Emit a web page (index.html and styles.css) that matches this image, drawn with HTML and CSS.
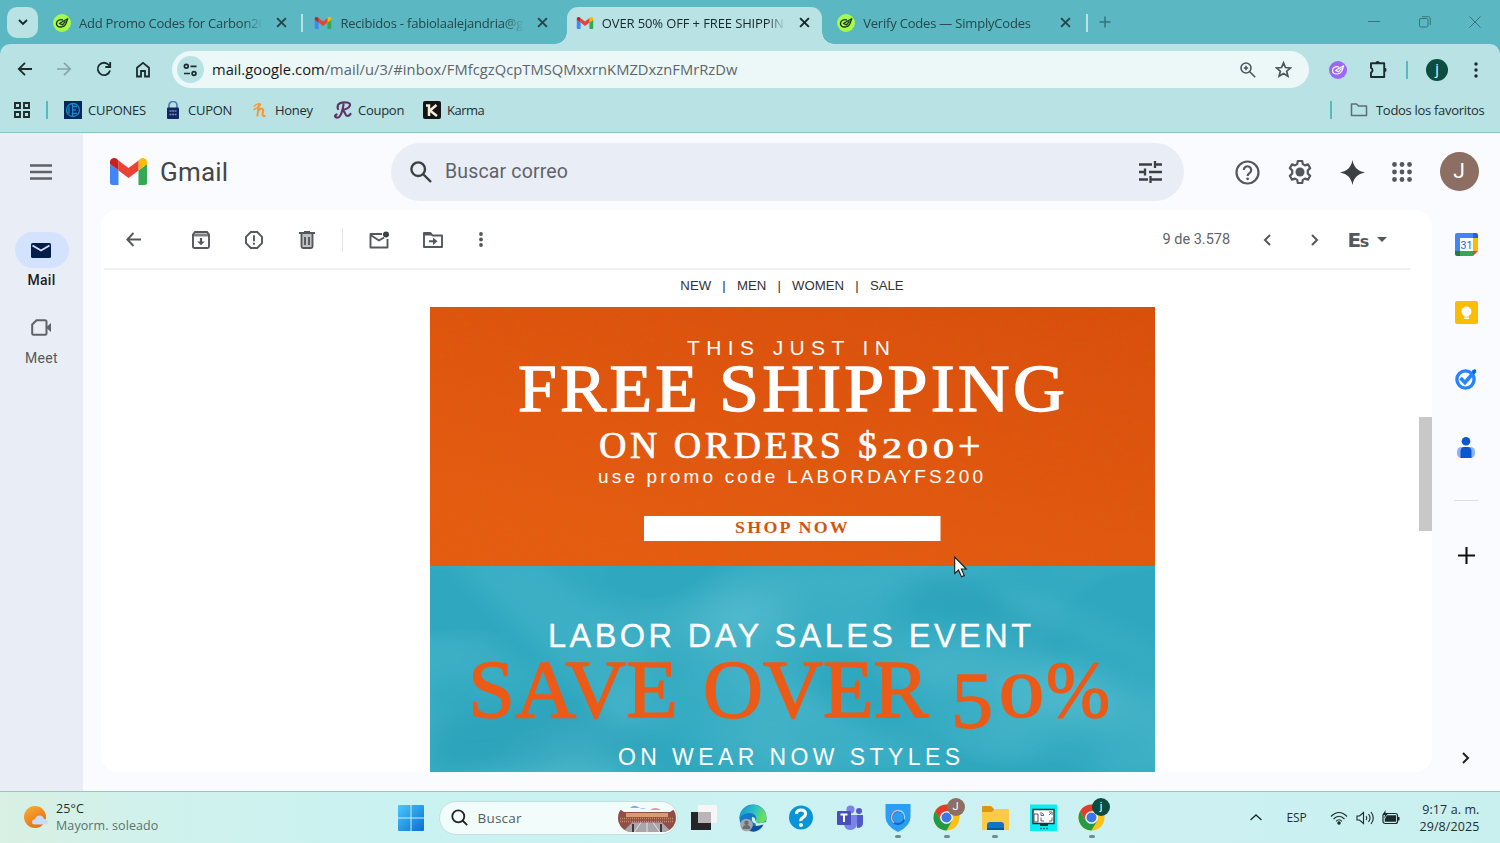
FILE: index.html
```html
<!DOCTYPE html>
<html lang="es">
<head>
    <meta charset="UTF-8">
    <meta name="viewport" content="width=device-width, initial-scale=1.0">
    <title>Gmail</title>
    <link rel="stylesheet" href="styles.css">
</head>
<body>
    <!-- shared icons -->
    <svg class="defs" width="0" height="0">
        <symbol id="gmail" viewBox="0 0 37 27">
            <path fill="#4285f4" d="M0 6v18.500Q0 27 2.500 27H8.500V12.500L0 6z"/>
            <path fill="#34a853" d="M28.500 12.500V27h6Q37 27 37 24.500V6z"/>
            <path fill="#fbbc04" d="M28.500 2.500V12.500L37 6V4C37 .3 33-1.200 30 1z"/>
            <path fill="#ea4335" d="M8.500 12.500V2.500l10 7.500 10-7.500v10L18.500 20z"/>
            <path fill="#c5221f" d="M0 4v2l8.500 6.500V2.500L7 1C4-1.200 0 .3 0 4z"/>
        </symbol>
        <symbol id="simply" viewBox="0 0 18 18">
            <circle cx="9" cy="9" r="9" fill="#a5fa4b"/>
            <path fill="none" stroke="#173315" stroke-width="1.300" stroke-linecap="round" stroke-linejoin="round" d="M9.500 5.800C6 5.300 3.500 7 3.500 9.500s2 3.500 4.500 3.500 4-1.500 5-3.500l1.700-4.800-4.500 2.500L6.500 9.500l3 1.300 2.500-3"/>
        </symbol>
        <symbol id="x" viewBox="0 0 10 10">
            <path d="M1 1l8 8M9 1L1 9" fill="none" stroke="currentColor" stroke-width="1.800"/>
        </symbol>
        <symbol id="chrome" viewBox="0 0 28 28">
            <circle cx="14" cy="14" r="13.500" fill="#fbc116"/>
            <path fill="#e33b2e" d="M2.300 7.300A13.500 13.500 0 0 1 25.700 7.300H14L8.200 17.400z"/>
            <path fill="#229a48" d="M2.300 7.300A13.500 13.500 0 0 0 14 27.500l5.800-10.200H8.200z"/>
            <circle cx="14" cy="14" r="6.600" fill="#fff"/>
            <circle cx="14" cy="14" r="5.200" fill="#3b78e7"/>
        </symbol>
    </svg>

    <div class="tabs">
        <button class="tab-search"><svg width="10" height="7" viewBox="0 0 10 7"><path d="M1 1l4 4 4-4" fill="none" stroke="#17292b" stroke-width="1.900"/></svg></button>
        <div class="tab sep">
            <svg class="fav" width="18" height="18"><use href="#simply"/></svg>
            <span class="tab-title t1">Add Promo Codes for Carbon2C</span>
            <svg class="close" width="11" height="11"><use href="#x"/></svg>
        </div>
        <div class="tab">
            <svg class="fav" width="16" height="12"><use href="#gmail"/></svg>
            <span class="tab-title t2">Recibidos - fabiolaalejandria@g</span>
            <svg class="close" width="11" height="11"><use href="#x"/></svg>
        </div>
        <div class="tab active">
            <svg class="fav" width="16" height="12"><use href="#gmail"/></svg>
            <span class="tab-title t3">OVER 50% OFF + FREE SHIPPIN</span>
            <svg class="close" width="11" height="11"><use href="#x"/></svg>
        </div>
        <div class="tab sep">
            <svg class="fav" width="18" height="18"><use href="#simply"/></svg>
            <span class="tab-title t4">Verify Codes — SimplyCodes</span>
            <svg class="close" width="11" height="11"><use href="#x"/></svg>
        </div>
        <svg class="new-tab" width="12" height="12" viewBox="0 0 12 12"><path d="M6 .5v11M.5 6h11" stroke="#3b7379" stroke-width="1.500"/></svg>
        <div class="window-buttons">
            <svg width="12" height="12" viewBox="0 0 12 12"><path d="M0 5.500h12" stroke="#3b7379"/></svg>
            <svg width="12" height="12" viewBox="0 0 12 12" fill="none" stroke="#3b7379"><rect x=".5" y="2.500" width="8.500" height="8.500" rx="1.500"/><path d="M3 .7h6.500q1.800 0 1.800 1.800V9"/></svg>
            <svg width="12" height="12" viewBox="0 0 12 12"><path d="M.5.5l11 11M11.500.5l-11 11" stroke="#3b7379"/></svg>
        </div>
    </div>

    <div class="browser">
        <div class="toolbar">
            <div class="nav-icons">
                <svg width="16" height="16" viewBox="0 0 16 16" fill="none" stroke="#1d2b2d" stroke-width="1.800"><path d="M15 8H2M8 1.800L1.800 8 8 14.200"/></svg>
                <svg width="16" height="16" viewBox="0 0 16 16" fill="none" stroke="#86a4a7" stroke-width="1.700"><path d="M1 8h13M8 1.800L14.200 8 8 14.200"/></svg>
                <svg width="16" height="16" viewBox="0 0 16 16" fill="none" stroke="#1d2b2d" stroke-width="1.800"><path d="M14 9.500A6.200 6.200 0 1 1 12.800 4l1.400 1.600M14.200 1v5H9.300"/></svg>
                <svg width="16" height="17" viewBox="0 0 16 17" fill="none" stroke="#1d2b2d" stroke-width="1.800"><path d="M2 6.700L8 1.900l6 4.800V15.500h-4V10H6v5.500H2z"/></svg>
            </div>
            <div class="omnibox">
                <span class="site-info"><svg width="15" height="14" viewBox="0 0 15 14" fill="none" stroke="#1d2b2d" stroke-width="1.700"><circle cx="3.300" cy="3.300" r="1.900"/><path d="M7.500 3.300h6M1 10.500h6"/><circle cx="11" cy="10.500" r="1.900"/></svg></span>
                <span class="url"><b>mail.google.com</b>/mail/u/3/#inbox/FMfcgzQcpTMSQMxxrnKMZDxznFMrRzDw</span>
                <svg class="zoom" width="16" height="16" viewBox="0 0 16 16" fill="none" stroke="#4d5558" stroke-width="1.600"><circle cx="6" cy="6" r="5"/><path d="M9.700 9.700l5.500 5.500M3.800 6h4.400M6 3.800v4.400"/></svg>
                <svg width="17" height="17" viewBox="0 0 17 17" fill="none" stroke="#4d5558" stroke-width="1.700"><path d="M8.500 1.800l2 4.700 5 .4-3.800 3.300 1.200 5-4.400-2.700-4.400 2.700 1.200-5L1.500 6.900l5-.4z"/></svg>
            </div>
            <svg class="ext" width="18" height="18" viewBox="0 0 18 18"><circle cx="9" cy="9" r="9" fill="#9b67f5"/><path fill="none" stroke="#fff" stroke-width="1.200" stroke-linecap="round" stroke-linejoin="round" d="M9.500 5.800C6 5.300 3.500 7 3.500 9.500s2 3.500 4.500 3.500 4-1.500 5-3.500l1.700-4.800-4.500 2.500L6.500 9.500l3 1.300 2.500-3"/></svg>
            <svg class="puzzle" width="19" height="19" viewBox="0 0 19 19"><path d="M2 3.200h13.200v13.800H2v-4.500a2.500 2.500 0 0 0 0-4.600z" fill="none" stroke="#1d2b2d" stroke-width="1.900" stroke-linejoin="round"/><path d="M6.500 3a2.100 2.100 0 0 1 4.200 0zM15.500 7.800a2.100 2.100 0 0 1 0 4.200z" fill="#1d2b2d"/></svg>
            <i class="vline"></i>
            <span class="profile">j</span>
            <svg class="menu" width="4" height="16" viewBox="0 0 4 16" fill="#1d2b2d"><circle cx="2" cy="2" r="1.700"/><circle cx="2" cy="8" r="1.700"/><circle cx="2" cy="14" r="1.700"/></svg>
        </div>
        <div class="bookmarks">
            <svg class="apps" width="16" height="16" viewBox="0 0 16 16" fill="none" stroke="#1d2b2d" stroke-width="1.900"><path d="M1 1h5v5H1zM10 1h5v5h-5zM1 10h5v5H1zM10 10h5v5h-5z"/></svg>
            <i class="vline"></i>
            <div class="bookmark b1"><svg width="18" height="18" viewBox="0 0 18 18"><path fill="#06265e" d="M0 0h18v18H0z"/><circle cx="9" cy="9" r="6.500" fill="none" stroke="#178bc8" stroke-width="1.300"/><path d="M8.500 3v12M5 5.500v7M8.500 5.500H13M8.500 9H12M8.500 12.500H13" stroke="#178bc8" stroke-width="1.300"/></svg>CUPONES</div>
            <div class="bookmark b2"><svg width="18" height="18" viewBox="0 0 18 18"><path d="M5 7V4.500a4 4 0 0 1 8 0V7" fill="none" stroke="#557baa" stroke-width="1.700"/><rect x="3" y="6.500" width="12" height="11.500" rx="1" fill="#102760"/><path d="M5.500 10h7M5.500 13.500h7" stroke="#7c8cb5" stroke-width="1.300" stroke-dasharray="2 .6"/></svg>CUPON</div>
            <div class="bookmark b3"><svg width="18" height="18" viewBox="0 0 18 18" fill="none" stroke="#f39a38" stroke-linecap="round"><path stroke-width="2.100" d="M7.800 3.500L6.500 14.500M7 10c3-4 6-2.500 5 .8-.8 3-.6 4.700 1.800 4.200"/><path stroke-width="1.400" d="M3.200 5.500C5 2.500 9 2 9.500 3.500S7 6.500 3 8.500"/></svg>Honey</div>
            <div class="bookmark b4"><svg width="18" height="18" viewBox="0 0 18 18" fill="none" stroke="#603268" stroke-width="2.200" stroke-linecap="round"><path d="M4 8C2 2 8 1 13 1.500s4 6-5 7.500c3 0 3 6 5 6s3-1 3.500-2M9.500 3.500C9 8 7 16 4 16.500s-4-2-1.500-3"/></svg>Coupon</div>
            <div class="bookmark b5"><svg width="18" height="18" viewBox="0 0 18 18"><rect width="18" height="18" rx="2" fill="#141414"/><path fill="none" stroke="#f4eadd" stroke-width="2.500" d="M3 4.500h3V15M13.500 4L7 9.500l7 5.500"/></svg>Karma</div>
            <div class="all-bookmarks"><i class="vline"></i><svg width="18" height="14" viewBox="0 0 18 14"><path d="M1.500 1h5l2 2h8v9.500h-15z" fill="none" stroke="#5e6d70" stroke-width="1.500" stroke-linejoin="round"/></svg><span>Todos los favoritos</span></div>
        </div>
    </div>

    <div class="gmail">
        <div class="sidebar">
            <svg class="burger" width="22" height="16" viewBox="0 0 22 16"><path d="M0 1.500h22M0 8h22M0 14.500h22" stroke="#5f6368" stroke-width="2.400"/></svg>
            <div class="pill"><svg width="20" height="15" viewBox="0 0 20 15"><rect width="20" height="15" rx="1.500" fill="#041e49"/><path d="M1.500 2.500L10 7.500l8.500-5" fill="none" stroke="#d3e3fd" stroke-width="1.800"/></svg></div>
            <span class="side-label on">Mail</span>
            <svg class="meet" width="20" height="17" viewBox="0 0 20 17"><path d="M5.500 1.200H14q1.500 0 1.500 1.500v11.500q0 1.500-1.500 1.500H2.700q-1.500 0-1.500-1.500V5.500z" fill="none" stroke="#5f6368" stroke-width="2"/><path d="M15 8.500L20 4v9z" fill="#5f6368"/></svg>
            <span class="side-label">Meet</span>
        </div>

        <div class="content">
            <div class="header">
                <svg class="logo" width="37" height="27"><use href="#gmail"/></svg>
                <span class="brand">Gmail</span>
                <div class="search">
                    <svg width="22" height="22" viewBox="0 0 22 22" fill="none" stroke="#3c4043" stroke-width="2.400"><circle cx="8.200" cy="8.200" r="6.800"/><path d="M13 13l8 8"/></svg>
                    <span>Buscar correo</span>
                    <svg width="23" height="22" viewBox="0 0 23 22" fill="none" stroke="#3c4043" stroke-width="2.300"><path d="M0 3.500h13M16 3.500h7M16 0v7M0 11h7M6 7.500v7M10 11h13M0 18.500h9M11.500 15v7M12 18.500h11"/></svg>
                </div>
                <div class="header-icons">
                    <svg width="25" height="25" viewBox="0 0 25 25"><circle cx="12.500" cy="12.500" r="11" fill="none" stroke="#54585c" stroke-width="2.200"/><path d="M8.800 10a3.700 3.700 0 1 1 5.700 3.100c-1.400 1-1.900 1.500-1.900 3" fill="none" stroke="#54585c" stroke-width="2.200"/><circle cx="12.600" cy="18.800" r="1.400" fill="#54585c"/></svg>
                    <svg width="26" height="26" viewBox="0 0 26 26"><path d="M10.800 2h4.400l.6 3.100 2.200 1.300 3-1 2.200 3.800L20.800 11.300v3.400l2.400 2.100-2.200 3.800-3-1-2.200 1.300-.6 3.100h-4.400l-.6-3.100L8 19.600l-3 1-2.200-3.800 2.400-2.100v-3.400L2.800 9.200 5 5.400l3 1 2.200-1.300z" fill="none" stroke="#54585c" stroke-width="2.200" stroke-linejoin="round"/><circle cx="13" cy="13" r="4.500" fill="#54585c"/></svg>
                    <svg width="25" height="25" viewBox="0 0 25 25"><path d="M12.500 0c1.500 7.500 5 11 12.500 12.500-7.500 1.500-11 5-12.500 12.500C11 17.500 7.500 14 0 12.500 7.500 11 11 7.500 12.500 0z" fill="#3c4043"/></svg>
                    <svg width="20" height="20" viewBox="0 0 20 20" fill="#54585c"><circle cx="2.500" cy="2.500" r="2.400"/><circle cx="10" cy="2.500" r="2.400"/><circle cx="17.500" cy="2.500" r="2.400"/><circle cx="2.500" cy="10" r="2.400"/><circle cx="10" cy="10" r="2.400"/><circle cx="17.500" cy="10" r="2.400"/><circle cx="2.500" cy="17.500" r="2.400"/><circle cx="10" cy="17.500" r="2.400"/><circle cx="17.500" cy="17.500" r="2.400"/></svg>
                </div>
                <span class="avatar">J</span>
            </div>

            <div class="main">
                <div class="panel">
                    <div class="mail">
                        <div class="actions">
                            <svg class="i1" width="15" height="15" viewBox="0 0 15 15" fill="none" stroke="#54585c" stroke-width="1.900"><path d="M15 7.500H1.500M7.500 1L1.300 7.500l6.200 6.500"/></svg>
                            <svg class="i2" width="18" height="18" viewBox="0 0 18 18"><path d="M1 3.500L3 1h12l2 2.500V15.500q0 1.500-1.500 1.500h-13Q1 17 1 15.500z" fill="none" stroke="#54585c" stroke-width="1.900"/><path d="M1 2.500h16v3H1z" fill="#54585c" opacity=".75"/><path d="M7.900 7h2.200v3.500h2.700L9 14.300l-3.800-3.800h2.700z" fill="#54585c"/></svg>
                            <svg class="i3" width="18" height="18" viewBox="0 0 18 18" fill="none" stroke="#54585c" stroke-width="1.900"><path d="M5.800 1h6.400L17 5.800v6.400L12.200 17H5.800L1 12.200V5.800zM9 4.300v6M9 11.800v2"/></svg>
                            <svg class="i4" width="16" height="18" viewBox="0 0 16 18"><path d="M2.500 3v12.500Q2.500 17 4 17h8q1.500 0 1.500-1.500V3" fill="#bfc2c5" stroke="#54585c" stroke-width="1.900"/><path d="M0 2h16M5 1h6M6 6v8M10 6v8" stroke="#54585c" stroke-width="1.900"/></svg>
                            <i class="divider"></i>
                            <svg class="i5" width="21" height="18" viewBox="0 0 21 18"><path d="M13 3H1.500v13.500h17V8M1.500 4l8.500 5.500L15 6.500" fill="none" stroke="#54585c" stroke-width="1.900" stroke-linejoin="round"/><circle cx="17" cy="3.500" r="3" fill="#3c4043"/></svg>
                            <svg class="i6" width="20" height="16" viewBox="0 0 20 16"><path d="M1 1h6.500l2 2.500H19V15H1z" fill="none" stroke="#54585c" stroke-width="1.900" stroke-linejoin="round"/><path d="M1 1h6.500l2 2.500H1z" fill="#54585c"/><path d="M6 8.300h4V5.500L14.500 9.300 10 13v-2.800H6z" fill="#54585c"/></svg>
                            <svg class="i7" width="4" height="15" viewBox="0 0 4 15" fill="#54585c"><circle cx="2" cy="2" r="1.900"/><circle cx="2" cy="7.500" r="1.900"/><circle cx="2" cy="13" r="1.900"/></svg>
                            <span class="count">9 de 3.578</span>
                            <svg class="i8" width="8" height="12" viewBox="0 0 8 12"><path d="M7 1L2 6l5 5" fill="none" stroke="#54585c" stroke-width="2"/></svg>
                            <svg class="i9" width="8" height="12" viewBox="0 0 8 12"><path d="M1 1l5 5-5 5" fill="none" stroke="#54585c" stroke-width="2"/></svg>
                            <span class="lang">E<small>s</small></span>
                            <svg class="i10" width="10" height="5" viewBox="0 0 10 5"><path d="M0 0h10L5 5z" fill="#54585c"/></svg>
                        </div>
                        <div class="message">
                            <div class="shop-nav"><span>NEW</span><span>|</span><span>MEN</span><span>|</span><span>WOMEN</span><span>|</span><span>SALE</span></div>
                            <svg class="promo" width="725" height="465" viewBox="0 0 725 465">
                                <defs>
                                    <linearGradient id="orange" x1="1" y1="0" x2=".4" y2="1">
                                        <stop offset="0" stop-color="#d94e0d"/>
                                        <stop offset="1" stop-color="#e55c12"/>
                                    </linearGradient>
                                    <filter id="paper" x="0" y="0" width="1" height="1">
                                        <feTurbulence type="fractalNoise" baseFrequency=".12 .2" numOctaves="3" seed="4"/>
                                        <feColorMatrix values="0 0 0 0 .55  0 0 0 0 .18  0 0 0 0 0  .8 0 0 0 -.34"/>
                                    </filter>
                                    <filter id="cloth" x="0" y="0" width="1" height="1">
                                        <feTurbulence type="fractalNoise" baseFrequency=".005 .009" numOctaves="2" seed="11"/>
                                        <feColorMatrix values="0 0 0 0 .33  0 0 0 0 .74  0 0 0 0 .84  1.600 0 0 0 -.6"/>
                                    </filter>
                                    <clipPath id="teal"><rect y="259" width="725" height="206"/></clipPath>
                                </defs>
                                <rect width="725" height="259" fill="url(#orange)"/>
                                <rect width="725" height="259" filter="url(#paper)" opacity=".4"/>
                                <rect y="259" width="725" height="206" fill="#2fa8bf"/>
                                <rect y="259" width="725" height="206" filter="url(#cloth)" opacity=".45"/>
                                <!-- folds in the cloth -->
                                <g clip-path="url(#teal)">
                                    <g class="folds">
                                        <path fill="#5cc0d4" d="M20 250l90 0 120 110-40 60-80-80z"/>
                                        <path fill="#5cc0d4" d="M560 270l165 75v20l-150-70z"/>
                                        <path fill="#5cc0d4" d="M340 370l180 90h-100z"/>
                                        <path fill="#1c93ad" d="M510 262l140 70-20 15-160-60z"/>
                                        <path fill="#1c93ad" d="M0 410l150-20 90 60-240 20z"/>
                                    </g>
                                </g>
                                <g class="sans" fill="#fff">
                                    <text x="257" y="48" font-size="21" textLength="203">THIS JUST IN</text>
                                    <text x="168" y="176" font-size="19" textLength="385">use promo code LABORDAYFS200</text>
                                    <text x="118" y="339.500" font-size="32.500" stroke="#fff" stroke-width=".3" textLength="483">LABOR DAY SALES EVENT</text>
                                    <text x="188" y="458" font-size="23" textLength="342">ON WEAR NOW STYLES</text>
                                </g>
                                <g class="serif" fill="#fff" stroke="#fff">
                                    <g class="spaced" stroke-width="1.300">
                                        <text x="88" y="104" font-size="67" textLength="183" lengthAdjust="spacingAndGlyphs">FREE</text>
                                        <text x="289" y="104" font-size="67" textLength="349" lengthAdjust="spacingAndGlyphs">SHIPPING</text>
                                    </g>
                                    <text x="169" y="151" font-size="38" stroke-width=".7" textLength="242">ON ORDERS</text>
                                    <text x="428" y="151" font-size="38" stroke-width=".7">$</text>
                                    <text x="452" y="151" font-size="29" stroke-width=".7" textLength="20" lengthAdjust="spacingAndGlyphs">2</text>
                                    <text x="477" y="151" font-size="29" stroke-width=".7" textLength="21" lengthAdjust="spacingAndGlyphs">0</text>
                                    <text x="503" y="151" font-size="29" stroke-width=".7" textLength="21" lengthAdjust="spacingAndGlyphs">0</text>
                                    <text x="528" y="152" font-size="40" stroke-width=".5">+</text>
                                </g>
                                <rect x="214" y="209" width="296.500" height="25" fill="#fff"/>
                                <text class="serif spaced-sm" x="305" y="226" font-size="16" font-weight="bold" fill="#d4530f" textLength="115" lengthAdjust="spacingAndGlyphs">SHOP NOW</text>
                                <g class="serif" fill="#ec5a17" stroke="#ec5a17" stroke-width="1.500">
                                    <text x="38" y="410" font-size="82" textLength="210" lengthAdjust="spacingAndGlyphs">SAVE</text>
                                    <text x="273" y="410" font-size="82" textLength="226" lengthAdjust="spacingAndGlyphs">OVER</text>
                                    <text x="521" y="421" font-size="80" textLength="42" lengthAdjust="spacingAndGlyphs">5</text>
                                    <text x="569" y="410" font-size="63" textLength="45" lengthAdjust="spacingAndGlyphs">0</text>
                                    <text x="616" y="410" font-size="81" textLength="64" lengthAdjust="spacingAndGlyphs">%</text>
                                </g>
                            </svg>
                        </div>
                    </div>
                    <div class="scrollbar"><div class="thumb"></div></div>
                </div>
                <div class="rail">
                    <svg class="r1" width="23" height="23" viewBox="0 0 23 23"><path fill="#4285f4" d="M2 0h16v5H5v13H0V2q0-2 2-2z"/><path fill="#1967d2" d="M18 0h3q2 0 2 2v3h-5z"/><path fill="#fbbc04" d="M18 5h5v13h-5z"/><path fill="#34a853" d="M5 18h13v5H5z"/><path fill="#188038" d="M0 18h5v5H2q-2 0-2-2z"/><path fill="#ea4335" d="M18 18h5l-5 5z"/><path fill="#fff" d="M5 5h13v13H5z"/><text x="11.500" y="15.500" font-size="10.500" text-anchor="middle" fill="#1967d2">31</text></svg>
                    <svg class="r2" width="23" height="23" viewBox="0 0 23 23"><rect width="23" height="23" rx="2" fill="#fbbc04"/><circle cx="11.500" cy="10.500" r="5" fill="#fff"/><path d="M9 14h5v1.500H9zM9 16.500h5V18H9z" fill="#fff"/></svg>
                    <svg class="r3" width="22" height="22" viewBox="0 0 22 22"><circle cx="10.500" cy="11.500" r="8.600" fill="none" stroke="#2684fc" stroke-width="3.400"/><path d="M5.500 10l4.500 4.500L20 3" fill="none" stroke="#2684fc" stroke-width="3.600"/><path d="M17 2.500l3-1.500 1.500 2-3 3.500z" fill="#0066da"/></svg>
                    <svg class="r4" width="18" height="21" viewBox="0 0 18 21"><rect y="10" width="18" height="11" rx="4.500" fill="#8db2fb"/><circle cx="9" cy="4.300" r="4.300" fill="#0b57d0"/><path d="M3.500 21v-6.500q0-4.500 4-4.500h3q4 0 4 4.500V21z" fill="#0b57d0"/></svg>
                    <i class="rail-line"></i>
                    <svg class="r5" width="17" height="17" viewBox="0 0 17 17"><path d="M8.500 0v17M0 8.500h17" stroke="#111" stroke-width="2.100"/></svg>
                    <svg class="r6" width="8" height="12" viewBox="0 0 8 12"><path d="M1 1l5 5-5 5" fill="none" stroke="#222" stroke-width="2"/></svg>
                </div>
            </div>
        </div>
    </div>

    <div class="taskbar">
        <div class="weather">
            <svg width="26" height="24" viewBox="0 0 26 24"><defs><linearGradient id="sun" x2=".6" y2="1"><stop stop-color="#f8b133"/><stop offset="1" stop-color="#ea6d16"/></linearGradient></defs><circle cx="12" cy="11" r="11" fill="url(#sun)"/><path d="M12 18.500q-3 0-3-2.500t3-2.700Q13 9.500 16.500 9.500t4.500 3.500q4 0 4 3t-3 2.500z" fill="#c9dcf8"/></svg>
            <div class="weather-text"><span>25°C</span><span class="sky">Mayorm. soleado</span></div>
        </div>
        <div class="tasks">
            <svg width="26" height="26" viewBox="0 0 26 26"><defs><linearGradient id="win" x2="1" y2="1"><stop stop-color="#49c8fb"/><stop offset="1" stop-color="#0a6ed4"/></linearGradient></defs><path fill="url(#win)" d="M1 0h11.500v12.500H0V1q0-1 1-1zM13.500 0H25q1 0 1 1v11.500H13.500zM0 13.500h12.500V26H1q-1 0-1-1zM13.500 13.500H26V25q0 1-1 1H13.500z"/></svg>
            <div class="task-search">
                <svg width="17" height="17" viewBox="0 0 17 17" fill="none" stroke="#222" stroke-width="1.800"><circle cx="7.300" cy="7.300" r="6"/><path d="M11.500 11.500l4.700 4.700"/></svg>
                <span>Buscar</span>
                <svg class="arena" width="58" height="28" viewBox="0 0 58 28"><defs><clipPath id="oval"><rect width="58" height="28" rx="14"/></clipPath></defs><g clip-path="url(#oval)"><path fill="#f1fcfb" d="M0 0h58v28H0z"/><path d="M12 4q4-4 8-1t8 1z" fill="#8fa9d8"/><path d="M32 6q5-4 11 0z" fill="#e2959e"/><path fill="#8f4f49" d="M0 4l6 4h46l6-4v24H0z"/><path fill="#dd9a72" d="M8 9h42v4H8z"/><path d="M2 14.500h54M2 17.500h54" stroke="#c98a72" stroke-width="1.500" stroke-dasharray="1 1"/><path fill="#a9a5a8" d="M14 18.500h30l10 10H4z"/><path d="M23 18.500l-7 10M35 18.500l7 10M29 18.500v10" stroke="#e4dddb"/><path d="M15 20v8M43 20v8" stroke="#3e3640" stroke-width="2"/></g></svg>
            </div>
            <svg class="app" width="28" height="28" viewBox="0 0 28 28"><path fill="#262626" d="M1 8h20v18H1z"/><path fill="#f6f6f6" d="M8 1h19v18H8z"/><path fill="#b9b5bb" d="M8 8h13v11H8z"/></svg>
            <svg class="app" width="28" height="28" viewBox="0 0 28 28"><defs><linearGradient id="edge" x2="1" y2=".3"><stop stop-color="#168ed1"/><stop offset=".6" stop-color="#2cc3c7"/><stop offset="1" stop-color="#6ddf58"/></linearGradient></defs><circle cx="14" cy="14" r="13.500" fill="#1479c8"/><path d="M16 17q0 4 11 1v9h-9z" fill="#cbf1f2"/><path d="M.7 12A13.500 13.500 0 0 1 27.500 14c0 6-9 6-11 3 2-3 0-8-6-8C5 9 1 12 .5 16z" fill="url(#edge)"/><path d="M10 14c-2 8 6 9.500 14.500 6.500-2 4.500-6 7-10.500 7C8 27 6 19 10 14z" fill="#0b529e"/><path d="M13 13q3.500 0 3.300 3.500 1 2.500 4 2.700-4 1-6-.700t-1.300-5.500z" fill="#cbf1f2"/><circle cx="7.500" cy="21" r="6.300" fill="#a4a7aa"/><circle cx="7.500" cy="18.800" r="2.200" fill="#686c70"/><path d="M3.500 25q0-4 4-4t4 4z" fill="#686c70"/></svg>
            <svg class="app" width="28" height="28" viewBox="0 0 28 28"><circle cx="14" cy="13.500" r="12" fill="#0795d8"/><path d="M9.500 10Q9.500 6 14 6t4.500 4Q18.500 12 16 13.500T14 17" fill="none" stroke="#fff" stroke-width="3.200"/><circle cx="14" cy="21" r="2" fill="#fff"/></svg>
            <svg class="app" width="28" height="28" viewBox="0 0 28 28"><circle cx="23" cy="7" r="3" fill="#5558be"/><circle cx="14.500" cy="5.500" r="4" fill="#7a80e5"/><path d="M20 11h7v8q0 5-6 5z" fill="#5059c9"/><path d="M8 11h13v8q0 7-7 7-6 0-6-7z" fill="#7b83eb"/><rect x="1" y="7" width="14" height="14" rx="1" fill="#464fba"/><path d="M4.500 10.500h7M8 10.500V18" stroke="#fff" stroke-width="2"/></svg>
            <svg class="app" width="28" height="28" viewBox="0 0 28 28"><path d="M1.500 0h25v13q0 9-12.500 15Q1.500 22 1.500 13z" fill="#2c9df4"/><circle cx="14" cy="13.500" r="6.500" fill="none" stroke="#1467bd" stroke-width="2"/><path d="M14.500 6.500a7 7 0 0 0-4.500 12.300" fill="none" stroke="#e6b2a8" stroke-width="1.500"/><path d="M14 6.500a7 7 0 0 1 6.500 9" fill="none" stroke="#8bd9f9" stroke-width="1.500"/><rect class="dot" x="11" y="31" width="6" height="3" rx="1.500"/></svg>
            <div class="app badge-app"><svg width="28" height="36"><use href="#chrome" width="27" height="27"/><rect class="dot" x="11" y="31" width="6" height="3" rx="1.500"/></svg><span class="badge brown">J</span></div>
            <svg class="app" width="28" height="28" viewBox="0 0 28 28"><path fill="#d99810" d="M1 3q0-1 1-1h8l3 3v6H1z"/><path fill="#fbcb45" d="M1 8h10l3-3h13q1 0 1 1v20H1z"/><path fill="#1173c5" d="M6 26v-5q0-3 3-3h11q3 0 3 3v5z"/><path fill="#0b559c" d="M6 24h17v2H6z"/><rect class="dot" x="11" y="31" width="6" height="3" rx="1.500"/></svg>
            <svg class="app" width="28" height="28" viewBox="0 0 28 28"><path fill="#08eef2" d="M0 .5h27V27H0z"/><path fill="#fff" stroke="#223539" stroke-width="1.400" d="M3 5.500h21v14H3z"/><path d="M11 8v3.500h3M19 8h3v3M11 13.500v3.500h3M19 17h3v-3.500M12 9l2 2M19 11l2-2" fill="none" stroke="#555" stroke-width=".9"/><path d="M4 10v8h4v-8z" fill="#fff" stroke="#555"/><path d="M10 20h8v2h-8z" fill="#223539"/><path d="M10 24.500h8" stroke="#168796" stroke-width="1.700" stroke-dasharray="2 1"/></svg>
            <div class="app badge-app"><svg width="28" height="36"><use href="#chrome" width="27" height="27"/><rect class="dot" x="11" y="31" width="6" height="3" rx="1.500"/></svg><span class="badge green">j</span></div>
        </div>
        <div class="tray">
            <svg width="12" height="7" viewBox="0 0 12 7"><path d="M.5 6L6 1l5.500 5" fill="none" stroke="#1b2b2c" stroke-width="1.300"/></svg>
            <span class="esp">ESP</span>
            <svg class="wifi" width="18" height="14" viewBox="0 0 18 14" fill="none" stroke="#1b2b2c" stroke-width="1.100"><path d="M1 5.500q8-8 16 0M3.500 8q5.500-5.500 11 0M6 10.300q3-3 6 0"/><circle cx="9" cy="12" r="1.200" fill="#1b2b2c"/></svg>
            <svg class="vol" width="18" height="14" viewBox="0 0 18 14" fill="none" stroke="#1b2b2c" stroke-width="1.100"><path d="M1 5h2.500L7.500 1.500v11L3.500 9H1zM10 5q1.500 2 0 4M12.500 3q3 4 0 8M15 1q4.500 6 0 12"/></svg>
            <svg class="bat" width="18" height="15" viewBox="0 0 18 15"><rect x="1" y="3.500" width="14.500" height="10" rx="2" fill="none" stroke="#1b2b2c" stroke-width="1.200"/><path d="M5 5.300h9v6.400H2.800V9zM16 7h1.500v3.500H16z" fill="#1b2b2c"/><path d="M3.500 0L.5 5H3L2 8.500l4-5H3.500z" fill="#1b2b2c"/></svg>
            <div class="clock"><span>9:17 a. m.</span><span>29/8/2025</span></div>
        </div>
    </div>

    <svg class="cursor" width="14" height="22" viewBox="0 0 14 22"><path d="M.7 1v16.500L4.500 14l3 6.800 2.800-1.200L7.300 13h5z" fill="#fff" stroke="#1a1a1a" stroke-width="1.100"/></svg>
</body>
</html>
```
FILE: styles.css
```css
* {
    box-sizing: border-box;
}
body {
    margin: 0;
    width: 1500px;
    height: 843px;
    overflow: hidden;
    display: flex;
    flex-direction: column;
    background: #f9fbff;
    font-family: "Open Sans", "Noto Sans", sans-serif;
    font-size: 13px;
    color: #1f2f31;
}
svg {
    display: block;
    flex: none;
}
.defs {
    position: absolute;
}
.vline {
    width: 2px;
    height: 18px;
    background: #59b9c1;
}

/* tab strip */
.tabs {
    height: 44px;
    display: flex;
    align-items: center;
    padding-left: 7px;
    background: #5bb7c1;
    flex: none;
    z-index: 1;
}
.tab-search {
    width: 31px;
    height: 31px;
    margin-right: 6px;
    padding: 0;
    border: 0;
    border-radius: 10px;
    background: #b8e2e4;
    display: flex;
    align-items: center;
    justify-content: center;
}
.tab {
    position: relative;
    width: 261.4px;
    height: 37px;
    margin-top: 7px;
    padding: 0 12px 6px 9px;
    display: flex;
    align-items: center;
    color: #24484c;
}
.tab.active {
    background: #b8e2e4;
    border-radius: 11px 11px 0 0;
    width: 255px;
    margin-right: 6.4px;
    color: #18292b;
}
.tab.active::before,
.tab.active::after {
    content: "";
    position: absolute;
    bottom: 0;
    left: -12px;
    width: 12px;
    height: 12px;
    background: radial-gradient(circle at 0 0, transparent 11.5px, #b8e2e4 12px);
}
.tab.active::after {
    left: auto;
    right: -12px;
    background: radial-gradient(circle at 100% 0, transparent 11.5px, #b8e2e4 12px);
}
.tab.sep::after {
    content: "";
    position: absolute;
    right: 2px;
    top: 7px;
    width: 2px;
    height: 18px;
    background: #b8e2e4;
}
.fav {
    width: 18px;
    margin-right: 8px;
}
.tab-title {
    width: 184px;
    white-space: nowrap;
    overflow: hidden;
    -webkit-mask-image: linear-gradient(to right, #000 165px, transparent);
    mask-image: linear-gradient(to right, #000 165px, transparent);
}
.close {
    margin-left: 13px;
}
.t1 { letter-spacing: -0.22px; }
.t2 { letter-spacing: -0.2px; }
.t3 { letter-spacing: -0.12px; }
.t4 { letter-spacing: -0.2px; }
.new-tab {
    margin-left: 9px;
}
.window-buttons {
    margin-left: auto;
    margin-right: 19px;
    display: flex;
    gap: 38.5px;
}

/* address bar and bookmarks */
.browser {
    height: 89px;
    flex: none;
    background: #b8e2e4;
    border-bottom: 1px solid #8fc0c6;
    box-shadow: 0 -12px 0 #5bb7c1;
    border-radius: 10px 10px 0 0;
}
.toolbar {
    height: 51px;
    display: flex;
    align-items: center;
    padding-left: 17px;
}
.nav-icons {
    display: flex;
    gap: 23.3px;
    width: 155px;
}
.omnibox {
    width: 1137px;
    height: 37px;
    border-radius: 19px;
    background: #ecf7f8;
    display: flex;
    align-items: center;
    padding: 0 17px 0 5px;
}
.site-info {
    width: 27px;
    height: 27px;
    border-radius: 50%;
    background: #b8e2e4;
    display: flex;
    align-items: center;
    justify-content: center;
    margin-right: 8px;
}
.url {
    margin-top: -1px;
    font-size: 14.7px;
    letter-spacing: 0.05px;
    color: #5e6669;
    white-space: nowrap;
}
.url b {
    font-weight: normal;
    color: #15191a;
}
.zoom {
    margin-left: auto;
    margin-right: 19px;
}
.ext {
    margin-left: 20px;
}
.puzzle {
    margin: 0 18px 0 22px;
}
.profile {
    width: 22px;
    height: 22px;
    margin: 0 26px 0 18px;
    border-radius: 50%;
    background: #0b4d40;
    color: #fff;
    text-align: center;
    font-size: 14px;
    line-height: 19px;
}
.bookmarks {
    height: 30px;
    display: flex;
    align-items: center;
    padding-left: 14px;
}
.bookmarks > .vline {
    margin: 0 16px;
}
.bookmark {
    display: flex;
    align-items: center;
    gap: 6px;
    letter-spacing: -0.27px;
    white-space: nowrap;
}
.b1 { width: 100px; }
.b2 { width: 87px; }
.b3 { width: 83px; }
.b4 { width: 89px; }
.b5 { letter-spacing: -0.5px; }
.all-bookmarks {
    margin-left: auto;
    width: 170px;
    display: flex;
    align-items: center;
    white-space: nowrap;
    letter-spacing: -0.3px;
}
.all-bookmarks svg {
    margin: 0 8px 0 18px;
}

/* gmail */
.gmail {
    height: 658px;
    flex: none;
    display: flex;
    font-family: Roboto, sans-serif;
}
.sidebar {
    width: 83px;
    flex: none;
    background: #e9eef6;
    display: flex;
    flex-direction: column;
    align-items: center;
    padding-top: 31px;
}
.burger {
    margin-right: 1px;
}
.pill {
    width: 54px;
    height: 36px;
    margin: 52px 0 4px;
    padding-right: 1px;
    border-radius: 18px;
    background: #d3e3fd;
    display: flex;
    align-items: center;
    justify-content: center;
}
.side-label {
    font-size: 14px;
    line-height: 16px;
    letter-spacing: 0.3px;
    color: #54585c;
}
.side-label.on {
    color: #1f1f1f;
    font-weight: 500;
}
.meet {
    margin: 31px 1px 14px 0;
}
.content {
    flex: 1;
}
.header {
    height: 77px;
    display: flex;
    align-items: center;
    padding-left: 27px;
}
.brand {
    width: 231px;
    padding: 1px 0 0 13px;
    font-size: 26px;
    letter-spacing: 0.2px;
    color: #444746;
}
.search {
    width: 793px;
    height: 58px;
    margin-left: 13px;
    border-radius: 29px;
    background: #e9eef6;
    display: flex;
    align-items: center;
    padding: 0 22px 0 19px;
}
.search span {
    flex: 1;
    padding-left: 13px;
    font-size: 19.5px;
    letter-spacing: 0.15px;
    color: #5f6368;
}
.header-icons {
    display: flex;
    align-items: center;
    gap: 27px;
    margin: 1px 0 0 50.5px;
}
.avatar {
    width: 39px;
    height: 39px;
    margin-left: 28px;
    border-radius: 50%;
    background: #8d6e63;
    color: #fff;
    font-size: 21px;
    line-height: 39px;
    text-align: center;
}
.main {
    display: flex;
}
.panel {
    width: 1331px;
    height: 562px;
    margin-left: 18px;
    flex: none;
    border-radius: 16px;
    background: #fff;
    display: flex;
}
.mail {
    width: 1318px;
    overflow: hidden;
}
.actions {
    height: 60px;
    width: 1307px;
    margin-left: 3px;
    padding: 1px 0 0 22px;
    border-bottom: 2px solid #f0f1f2;
    display: flex;
    align-items: center;
}
.i2 { margin-left: 51px; }
.i3 { margin-left: 35px; }
.i4 { margin-left: 36px; }
.divider {
    width: 1px;
    height: 24px;
    margin: 0 26px 0 27px;
    background: #e3e5e7;
}
.i6 { margin-left: 33px; }
.i7 { margin-left: 36px; }
.count {
    width: 68px;
    margin-left: 679.5px;
    font-size: 14.5px;
    color: #5f6368;
    white-space: nowrap;
}
.i8 { margin-left: 32px; }
.i9 { margin-left: 40px; }
.lang {
    margin: 3px 0 0 29px;
    width: 24px;
    font: bold 20px/24px "DejaVu Sans", Roboto, sans-serif;
    letter-spacing: -1.5px;
    color: #54585c;
}
.lang small {
    font-size: 16px;
}
.i10 { margin-left: 5px; }
.message {
    width: 725px;
    margin-left: 329px;
}
.shop-nav {
    height: 37px;
    padding: 7px 1px 0 0;
    display: flex;
    justify-content: center;
    gap: 11.2px;
    font: 13.2px/18px "Liberation Sans", Arial, sans-serif;
    color: #333;
}
.folds {
    opacity: 0.3;
    filter: blur(12px);
}
.sans {
    font-family: "Liberation Sans", Arial, sans-serif;
}
.serif {
    font-family: "Liberation Serif", Georgia, serif;
}
.spaced {
    letter-spacing: 3px;
}
.spaced-sm {
    letter-spacing: 2px;
}
.scrollbar {
    width: 13px;
    padding-top: 207px;
}
.thumb {
    height: 114px;
    background: #c8c8c8;
}
.rail {
    width: 68px;
    display: flex;
    flex-direction: column;
    align-items: center;
    padding-top: 23px;
}
.r2 { margin-top: 45px; }
.r3 { margin-top: 44px; }
.r4 { margin-top: 47px; }
.rail-line {
    width: 24px;
    height: 1px;
    margin: 42px 0 46px;
    background: #dadce0;
}
.r6 { margin-top: 188px; }

/* windows taskbar */
.taskbar {
    height: 52px;
    flex: none;
    display: flex;
    align-items: center;
    border-top: 1px solid #a3bfbf;
    background: linear-gradient(to right, #d9f0e3, #d0f1ec 150px, #caf2f1 380px, #cdf1f3 1200px, #c9efee);
}
.weather {
    width: 397.5px;
    padding-left: 23px;
    display: flex;
    align-items: center;
    gap: 7px;
}
.weather-text,
.clock {
    display: flex;
    flex-direction: column;
    font-size: 12.5px;
    line-height: 17px;
    letter-spacing: 0.1px;
}
.weather-text {
    margin-top: -1px;
}
.sky {
    color: #5b7371;
}
.tasks {
    display: flex;
    align-items: center;
    width: 849px;
}
.task-search {
    width: 239px;
    height: 34px;
    margin: 0 12.5px 0 15px;
    padding: 0 1px 0 11px;
    border: 1px solid #c5dedf;
    border-radius: 17px;
    background: #f1fcfb;
    display: flex;
    align-items: center;
    color: #545c5e;
    font-size: 13.5px;
    letter-spacing: 0.2px;
}
.task-search span {
    flex: 1;
    padding-left: 10px;
}
.app {
    margin-right: 20.5px;
    overflow: visible;
}
.dot {
    fill: #728b8c;
}
.badge-app {
    position: relative;
    width: 28px;
    height: 28px;
}
.badge {
    position: absolute;
    left: 14px;
    top: -6px;
    width: 18px;
    height: 18px;
    border-radius: 50%;
    color: #fff;
    font: 11px/18px Roboto, sans-serif;
    text-align: center;
}
.brown { background: #8d6e63; }
.green { background: #0b4d40; }
.tray {
    display: flex;
    align-items: center;
    padding-left: 3px;
}
.esp {
    width: 22px;
    margin-left: 25px;
    font-size: 12px;
    letter-spacing: -0.1px;
}
.wifi { margin-left: 21px; }
.vol { margin-left: 8px; }
.bat { margin-left: 8px; }
.clock {
    width: 80px;
    text-align: right;
}
.cursor {
    position: absolute;
    left: 954px;
    top: 556px;
}
```
